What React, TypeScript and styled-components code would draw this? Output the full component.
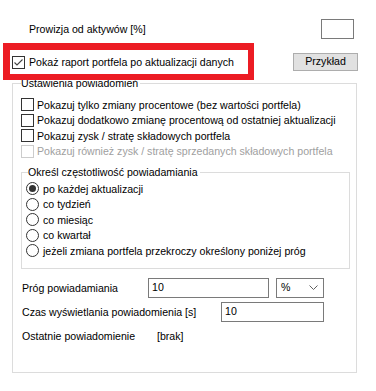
import React from "react";
import styled, { createGlobalStyle } from "styled-components";

const GlobalStyle = createGlobalStyle`
  html, body {
    margin: 0;
    padding: 0;
    background: #ffffff;
  }
  body {
    font-family: "Liberation Sans", Arial, sans-serif;
    font-size: 10.6px;
    color: #000000;
  }
`;

const Page = styled.div`
  width: 376px;
  height: 391px;
  padding-top: 19px;
  box-sizing: border-box;
  overflow: hidden;
`;

const FeeRow = styled.div`
  display: flex;
  align-items: center;
  justify-content: space-between;
  height: 20px;
  padding: 0 22px 0 29px;
`;

const TextBox = styled.div<{ $width: number }>`
  width: ${(p) => p.$width}px;
  height: 20px;
  box-sizing: border-box;
  border: 1px solid #7a7a7a;
  background: #ffffff;
  display: flex;
  align-items: center;
  padding-left: 3px;
  line-height: 1;
`;

const ReportRow = styled.div`
  display: flex;
  align-items: center;
  margin-top: 4px;
  padding-right: 18px;
`;

const Highlight = styled.div`
  position: relative;
  z-index: 1;
  margin-left: 3px;
  width: 251px;
  height: 37px;
  box-sizing: border-box;
  border: 7px solid #ec1c24;
  border-right-width: 6px;
  border-bottom-width: 6px;
  display: flex;
  align-items: center;
  padding-left: 2px;
`;

const Button = styled.button`
  margin-left: auto;
  width: 65px;
  height: 18px;
  box-sizing: border-box;
  border: 1px solid #adadad;
  background: #e1e1e1;
  font: inherit;
  color: #000000;
  padding: 0;
  line-height: 1;
`;

const Group = styled.fieldset<{ $padTop: number; $padBottom: number }>`
  margin: 0;
  border: 1px solid #dcdcdc;
  min-inline-size: 0;
  padding: ${(p) => p.$padTop}px 6px ${(p) => p.$padBottom}px 8px;
`;

const OuterGroup = styled(Group)`
  margin: -4px 19px 0 12px;
`;

const InnerGroup = styled(Group)`
  margin-top: 6px;
  padding-left: 4px;
  padding-right: 4px;
`;

const Legend = styled.legend<{ $offset: number }>`
  padding: 0 2px 0 0;
  margin-left: ${(p) => p.$offset}px;
  line-height: 14px;
`;

const OptionRow = styled.label<{ $disabled?: boolean; $gap: number }>`
  display: flex;
  align-items: center;
  gap: ${(p) => p.$gap}px;
  height: 15.5px;
  white-space: nowrap;
  color: ${(p) => (p.$disabled ? "#a0a0a0" : "#000000")};
`;

const Box = styled.span<{ $disabled?: boolean }>`
  flex: none;
  width: 13px;
  height: 13px;
  box-sizing: border-box;
  border: 1px solid ${(p) => (p.$disabled ? "#cccccc" : "#333333")};
  background: #ffffff;
  display: flex;
  align-items: center;
  justify-content: center;
`;

const Circle = styled.span`
  flex: none;
  width: 13px;
  height: 13px;
  box-sizing: border-box;
  border: 1px solid #333333;
  border-radius: 50%;
  background: #ffffff;
  display: flex;
  align-items: center;
  justify-content: center;
`;

const Dot = styled.span`
  width: 7px;
  height: 7px;
  border-radius: 50%;
  background: #333333;
`;

const FieldRow = styled.div<{ $top: number }>`
  display: flex;
  align-items: center;
  gap: 7px;
  margin-top: ${(p) => p.$top}px;
  min-height: 15px;
`;

const FieldLabel = styled.span<{ $width: number }>`
  flex: none;
  width: ${(p) => p.$width}px;
  padding-left: 1px;
  box-sizing: border-box;
  white-space: nowrap;
`;

const Combo = styled.div`
  width: 48px;
  height: 20px;
  box-sizing: border-box;
  border: 1px solid #7a7a7a;
  background: #ffffff;
  display: flex;
  align-items: center;
  justify-content: space-between;
  padding: 0 5px 0 4px;
  line-height: 1;
`;

const Check = ({ checked, disabled }: { checked?: boolean; disabled?: boolean }) => (
  <Box $disabled={disabled}>
    {checked && (
      <svg width="11" height="11" viewBox="0 0 11 11">
        <path d="M1.5 5.5 L4 8 L9.5 2.5" fill="none" stroke="#444" strokeWidth="1.1" />
      </svg>
    )}
  </Box>
);

const Radio = ({ checked }: { checked?: boolean }) => <Circle>{checked && <Dot />}</Circle>;

const options = [
  { text: "Pokazuj tylko zmiany procentowe (bez wartości portfela)" },
  { text: "Pokazuj dodatkowo zmianę procentową od ostatniej aktualizacji" },
  { text: "Pokazuj zysk / stratę składowych portfela" },
  { text: "Pokazuj również zysk / stratę sprzedanych składowych portfela", disabled: true },
];

const frequencies = [
  "po każdej aktualizacji",
  "co tydzień",
  "co miesiąc",
  "co kwartał",
  "jeżeli zmiana portfela przekroczy określony poniżej próg",
];

export default function App() {
  return (
    <>
      <GlobalStyle />
      <Page>
        <FeeRow>
          <span>Prowizja od aktywów [%]</span>
          <TextBox $width={33} />
        </FeeRow>

        <ReportRow>
          <Highlight>
            <OptionRow $gap={4}>
              <Check checked />
              <span>Pokaż raport portfela po aktualizacji danych</span>
            </OptionRow>
          </Highlight>
          <Button>Przykład</Button>
        </ReportRow>

        <OuterGroup $padTop={7} $padBottom={28}>
          <Legend $offset={0}>Ustawienia powiadomień</Legend>
          {options.map((o) => (
            <OptionRow key={o.text} $gap={3} $disabled={o.disabled}>
              <Check disabled={o.disabled} />
              <span>{o.text}</span>
            </OptionRow>
          ))}

          <InnerGroup $padTop={2} $padBottom={9}>
            <Legend $offset={2}>Określ częstotliwość powiadamiania</Legend>
            {frequencies.map((f, i) => (
              <OptionRow key={f} $gap={4}>
                <Radio checked={i === 0} />
                <span>{f}</span>
              </OptionRow>
            ))}
          </InnerGroup>

          <FieldRow $top={9}>
            <FieldLabel $width={120}>Próg powiadamiania</FieldLabel>
            <TextBox $width={121}>10</TextBox>
            <Combo>
              <span>%</span>
              <svg width="9" height="5" viewBox="0 0 9 5">
                <path d="M0.5 0.5 L4.5 4.5 L8.5 0.5" fill="none" stroke="#606060" strokeWidth="1" />
              </svg>
            </Combo>
          </FieldRow>

          <FieldRow $top={4}>
            <FieldLabel $width={193}>Czas wyświetlania powiadomienia [s]</FieldLabel>
            <TextBox $width={103}>10</TextBox>
          </FieldRow>

          <FieldRow $top={7}>
            <FieldLabel $width={129}>Ostatnie powiadomienie</FieldLabel>
            <span>[brak]</span>
          </FieldRow>
        </OuterGroup>
      </Page>
    </>
  );
}
